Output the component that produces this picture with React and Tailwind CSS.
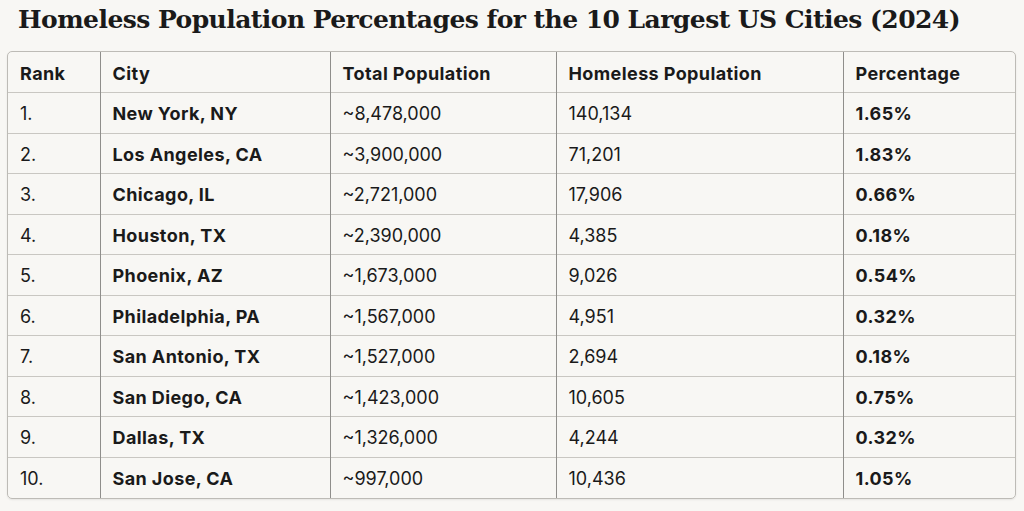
import React from 'react';

const rows = [
  ['1.', 'New York, NY', '~8,478,000', '140,134', '1.65%'],
  ['2.', 'Los Angeles, CA', '~3,900,000', '71,201', '1.83%'],
  ['3.', 'Chicago, IL', '~2,721,000', '17,906', '0.66%'],
  ['4.', 'Houston, TX', '~2,390,000', '4,385', '0.18%'],
  ['5.', 'Phoenix, AZ', '~1,673,000', '9,026', '0.54%'],
  ['6.', 'Philadelphia, PA', '~1,567,000', '4,951', '0.32%'],
  ['7.', 'San Antonio, TX', '~1,527,000', '2,694', '0.18%'],
  ['8.', 'San Diego, CA', '~1,423,000', '10,605', '0.75%'],
  ['9.', 'Dallas, TX', '~1,326,000', '4,244', '0.32%'],
  ['10.', 'San Jose, CA', '~997,000', '10,436', '1.05%'],
];

const cell = 'h-[40.5px] px-3 pt-[2px] text-left align-middle border-[#c9c7c2]';
const strong = 'font-bold tracking-[0.4px]';

const App = () => {
  return (
    <div className="bg-[#f8f7f4] min-h-screen w-[1024px] h-[511px] overflow-hidden pt-[5px] pl-[7px] pr-2 text-[#1a1a1a]">
      <h1 className="font-['DejaVu_Serif',serif] font-bold text-[25px] leading-[30px] tracking-[-0.55px] pl-[11px] mb-[16px]">
        Homeless Population Percentages for the 10 Largest US Cities (2024)
      </h1>
      <div className="border border-[#bdbbb6] rounded-[5px] overflow-hidden shadow-[0_1px_2px_rgba(0,0,0,0.08)] w-[1009px]">
        <table className="w-full border-collapse font-['Inter',sans-serif] text-[18px]">
          <thead>
            <tr>
              <th className={`${cell} ${strong} w-[92px]`}>Rank</th>
              <th className={`${cell} ${strong} w-[230px] border-l border-l-[#8f8e8b]`}>City</th>
              <th className={`${cell} ${strong} w-[226px] border-l border-l-[#8f8e8b]`}>Total Population</th>
              <th className={`${cell} ${strong} w-[287px] border-l border-l-[#8f8e8b]`}>Homeless Population</th>
              <th className={`${cell} ${strong} border-l border-l-[#8f8e8b]`}>Percentage</th>
            </tr>
          </thead>
          <tbody>
            {rows.map((r) => (
              <tr key={r[0]} className="border-t border-[#c9c7c2]">
                <td className={cell}>{r[0]}</td>
                <td className={`${cell} ${strong} border-l border-l-[#8f8e8b]`}>{r[1]}</td>
                <td className={`${cell} border-l border-l-[#8f8e8b]`}>{r[2]}</td>
                <td className={`${cell} border-l border-l-[#8f8e8b]`}>{r[3]}</td>
                <td className={`${cell} ${strong} border-l border-l-[#8f8e8b]`}>{r[4]}</td>
              </tr>
            ))}
          </tbody>
        </table>
      </div>
    </div>
  );
};

export default App;
